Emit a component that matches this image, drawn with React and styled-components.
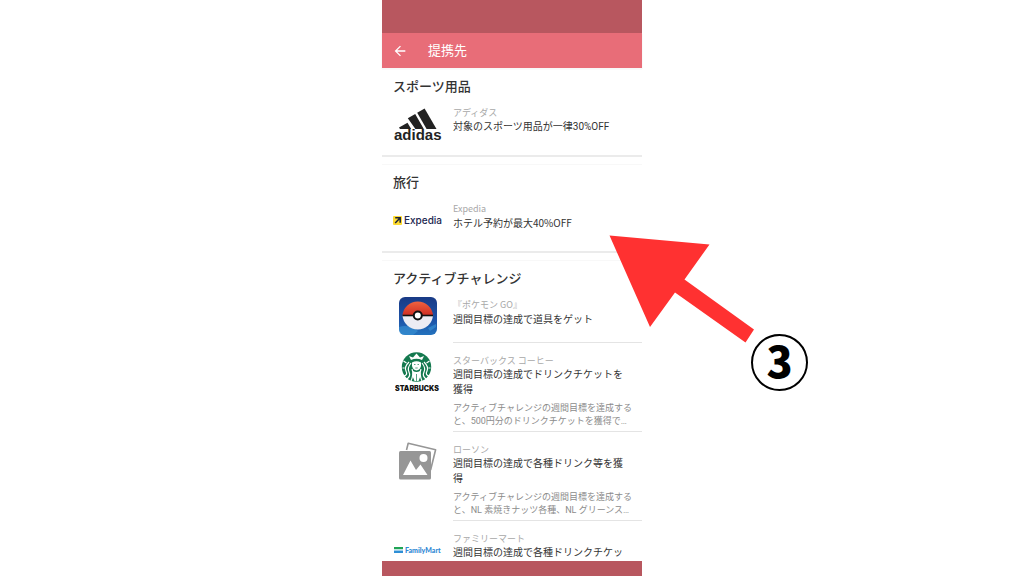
import React from 'react';
import styled, { createGlobalStyle } from 'styled-components';

const GlobalStyle = createGlobalStyle`
    * {
        box-sizing: border-box;
    }

    body {
        margin: 0;
        background-color: #fff;
        font-family: Roboto, 'Noto Sans CJK JP', sans-serif;
    }
`;

const Page = styled.div`
    position: relative;
    display: flex;
    justify-content: center;
    height: 100vh;
    overflow: hidden;
`;

const Phone = styled.div`
    display: flex;
    flex-direction: column;
    width: 100%;
    max-width: 260px;
    height: 100%;
    background-color: #fff;
`;

const SystemBar = styled.div`
    flex: none;
    height: ${({ $height }) => $height}px;
    background-color: #b8575f;
`;

const Header = styled.header`
    flex: none;
    display: flex;
    align-items: center;
    gap: 20px;
    height: 35px;
    padding: 0 10px;
    background-color: #e86d78;
    box-shadow: 0 1px 1px rgba(0, 0, 0, 0.12);
    color: #fff;
`;

const BackButton = styled.button`
    display: flex;
    padding: 0;
    border: none;
    background: none;
    color: inherit;
    cursor: pointer;
`;

const Title = styled.h1`
    margin: 0;
    font-size: 13px;
    font-weight: 400;
    line-height: 18px;
`;

const List = styled.main`
    flex: 1;
    min-height: 0;
    overflow: hidden;
`;

const Section = styled.section`
    margin-bottom: 7px;
    padding: 9px 0 4px;
    border-top: 1px solid #f8f8f8;
    border-bottom: 2px solid #ebebeb;
`;

const SectionTitle = styled.h2`
    margin: 0;
    padding-left: 11px;
    color: #333;
    font-size: 13px;
    font-weight: 500;
    line-height: 17px;
`;

const Items = styled.ul`
    margin: 0;
    padding: 0;
    list-style: none;
`;

const Item = styled.li`
    display: flex;
    min-height: 56px;
`;

const Logo = styled.div`
    flex: none;
    display: flex;
    align-items: center;
    justify-content: center;
    width: 71px;
    height: 40px;
    margin-top: 9px;
`;

const Body = styled.div`
    flex: 1;
    padding: 12px 0 3px;
    border-bottom: 1px solid ${({ $divider }) => ($divider ? '#e4e4e4' : 'transparent')};
    font-family: ${({ $cjkLatin }) => ($cjkLatin ? "'Noto Sans CJK JP', sans-serif" : 'inherit')};
`;

const Brand = styled.p`
    margin: 0;
    color: #a8a8a8;
    font-size: 9px;
    line-height: 12px;
`;

const Offer = styled.h3`
    margin: 0;
    padding-right: 14px;
    color: #333;
    font-size: 10px;
    font-weight: 400;
    line-height: 15px;
`;

const Detail = styled.p`
    margin: 5px 0 0;
    padding-right: 7px;
    color: #8c8c8c;
    font-size: 9px;
    line-height: 13px;
`;

const Pointer = styled.svg`
    position: absolute;
    top: 235px;
    left: calc(50% + 97px);
`;

const StepBadge = styled.div`
    position: absolute;
    top: 334px;
    left: calc(50% + 239px);
    display: flex;
    align-items: center;
    justify-content: center;
    width: 57px;
    height: 57px;
    padding-bottom: 6px;
    border: 2px solid #000;
    border-radius: 50%;
    color: #000;
    font-family: 'Noto Sans CJK JP', sans-serif;
    font-size: 43px;
    font-weight: 900;
    line-height: 47px;
`;

const AdidasLogo = () => (
    <svg width="50" height="36" viewBox="0 0 50 36" role="img" aria-label="adidas">
        <g fill="#222">
            <path d="M6 21.5 L14.5 16.7 L18.2 23 H7 Z" />
            <path d="M14.8 12.3 L22.2 8 L30.8 23 H22.4 L21 20.9 Z" />
            <path d="M24.2 6.7 L31.6 2.4 L43.5 23 H33.6 Z" />
        </g>
        <text x="1" y="34" fill="#222" fontFamily="'Liberation Sans', sans-serif" fontSize="15" fontWeight="700">adidas</text>
    </svg>
);

const ExpediaLogo = () => (
    <svg width="52" height="14" viewBox="0 0 52 14" role="img" aria-label="Expedia">
        <rect x="1" y="3" width="9" height="9" rx="1" fill="#fddb32" />
        <path d="M3.2 4.8 H8.2 V9.8 M8 5 L3.2 9.9" fill="none" stroke="#1e243a" strokeWidth="1.5" />
        <text x="12" y="11" fill="#20264f" fontFamily="Inter, sans-serif" fontSize="10" fontWeight="500">Expedia</text>
    </svg>
);

const PokemonLogo = () => (
    <svg width="38" height="38" viewBox="0 0 38 38" role="img" aria-label="Pokémon GO">
        <defs>
            <linearGradient id="sky" x1="0" y1="0" x2="0" y2="1">
                <stop offset="0" stopColor="#193a85" />
                <stop offset="0.6" stopColor="#1d53a8" />
                <stop offset="1" stopColor="#2372bd" />
            </linearGradient>
            <linearGradient id="ballTop" x1="0" y1="0" x2="0" y2="1">
                <stop offset="0" stopColor="#ee6340" />
                <stop offset="1" stopColor="#cf2c22" />
            </linearGradient>
        </defs>
        <rect width="38" height="38" rx="6" fill="url(#sky)" />
        <path d="M0 30 Q10 27 19 34 L14 38 H6 Q0 38 0 32 Z M29 31 L37 27 V30 L31 34 Z" fill="#3a94d6" opacity="0.6" />
        <path d="M3.5 18.5 A15.3 15.3 0 0 1 34 18.5 Z" fill="url(#ballTop)" />
        <path d="M3.5 18.5 A15.3 15.3 0 0 0 34 18.5 Z" fill="#ececf3" />
        <path d="M3.5 18.5 H34" stroke="#111" strokeWidth="1.6" />
        <circle cx="18.8" cy="18.5" r="4" fill="#fff" stroke="#111" strokeWidth="2" />
    </svg>
);

const StarbucksLogo = () => (
    <svg width="46" height="40" viewBox="0 0 46 40" role="img" aria-label="Starbucks">
        <circle cx="21.5" cy="15" r="14.7" fill="#14794f" />
        <g fill="none" stroke="#fff" strokeWidth="1.2">
            <path d="M16 11 Q12 16 14 20 T12 27" />
            <path d="M14 10 Q9 15 11 19 T9 24" />
            <path d="M27 11 Q31 16 29 20 T31 27" />
            <path d="M29 10 Q34 15 32 19 T34 24" />
            <path d="M17 17 Q19 22 16 29" />
            <path d="M26 17 Q24 22 27 29" />
            <path d="M8.5 9 L11.5 11 M34.5 9 L31.5 11 M7.5 16 H9.5 M35.5 16 H33.5" />
        </g>
        <path d="M17 10.5 Q21.5 8 26 10.5 V14 Q25 18 21.5 18.5 Q18 18 17 14 Z" fill="#fff" />
        <path d="M16 8 L14 4 L18 5.5 L21.5 1.5 L25 5.5 L29 4 L27 8 Q21.5 5.5 16 8 Z" fill="#fff" />
        <path d="M18 19 Q21.5 21 25 19 L25.5 24 L23.5 29 H19.5 L17.5 24 Z" fill="#fff" />
        <path d="M19 12.5 H20.5 M22.5 12.5 H24 M20.3 16 H22.7 M21.5 22 V29" stroke="#14794f" strokeWidth="0.7" />
        <text x="0" y="39" fill="#111" fontFamily="Inter, sans-serif" fontSize="7" fontWeight="900">STARBUCKS</text>
    </svg>
);

const PhotoPlaceholder = () => (
    <svg width="40" height="40" viewBox="0 0 40 40" role="img" aria-label="画像なし">
        <path d="M8.5 9 L10.2 2.2 L37.6 8.8 L32.6 29" fill="none" stroke="#969696" strokeWidth="1.6" strokeLinejoin="round" />
        <rect x="1" y="10" width="32" height="28.5" rx="1.5" fill="#969696" />
        <circle cx="25.5" cy="17" r="4" fill="#fff" />
        <path d="M5 34 L12.5 19.5 L18 29 L22.5 23.5 L29.5 34 Z" fill="#fff" />
    </svg>
);

const FamilyMartLogo = () => (
    <svg width="50" height="12" viewBox="0 0 50 12" role="img" aria-label="FamilyMart">
        <rect x="1" y="3" width="9" height="2.4" fill="#20a455" />
        <rect x="1" y="5.4" width="9" height="1.2" fill="#d9eef5" />
        <rect x="1" y="6.6" width="9" height="2.4" fill="#2e8fd6" />
        <text x="12" y="9" fill="#2f88d4" fontFamily="Lato, sans-serif" fontSize="7" fontWeight="900">FamilyMart</text>
    </svg>
);

const sections = [
    {
        title: 'スポーツ用品',
        items: [{ brand: 'アディダス', offer: '対象のスポーツ用品が一律30%OFF', logo: AdidasLogo }],
    },
    {
        title: '旅行',
        items: [{ brand: 'Expedia', offer: 'ホテル予約が最大40%OFF', logo: ExpediaLogo, cjkLatin: true }],
    },
    {
        title: 'アクティブチャレンジ',
        items: [
            { brand: '『ポケモン GO』', offer: '週間目標の達成で道具をゲット', logo: PokemonLogo, cjkLatin: true },
            {
                brand: 'スターバックス コーヒー',
                offer: '週間目標の達成でドリンクチケットを獲得',
                detail: 'アクティブチャレンジの週間目標を達成すると、500円分のドリンクチケットを獲得で…',
                logo: StarbucksLogo,
            },
            {
                brand: 'ローソン',
                offer: '週間目標の達成で各種ドリンク等を獲得',
                detail: 'アクティブチャレンジの週間目標を達成すると、NL 素焼きナッツ各種、NL グリーンス…',
                logo: PhotoPlaceholder,
            },
            { brand: 'ファミリーマート', offer: '週間目標の達成で各種ドリンクチケッ', logo: FamilyMartLogo },
        ],
    },
];

const PartnerItem = ({ item, divider }) => {
    const ItemLogo = item.logo;
    return (
        <Item>
            <Logo>
                <ItemLogo />
            </Logo>
            <Body $divider={divider} $cjkLatin={item.cjkLatin}>
                <Brand>{item.brand}</Brand>
                <Offer>{item.offer}</Offer>
                {item.detail && <Detail>{item.detail}</Detail>}
            </Body>
        </Item>
    );
};

const App = () => {
    return (
        <Page lang="ja">
            <GlobalStyle />
            <Phone>
                <SystemBar $height={33} />
                <Header>
                    <BackButton type="button" aria-label="戻る">
                        <svg width="16" height="16" viewBox="0 0 24 24" fill="currentColor">
                            <path d="M20 11H7.83l5.59-5.59L12 4l-8 8 8 8 1.41-1.41L7.83 13H20v-2z" />
                        </svg>
                    </BackButton>
                    <Title>提携先</Title>
                </Header>
                <List>
                    {sections.map((section) => (
                        <Section key={section.title}>
                            <SectionTitle>{section.title}</SectionTitle>
                            <Items>
                                {section.items.map((item, index) => (
                                    <PartnerItem
                                        key={item.brand}
                                        item={item}
                                        divider={index < section.items.length - 1}
                                    />
                                ))}
                            </Items>
                        </Section>
                    ))}
                </List>
                <SystemBar $height={15} />
            </Phone>
            <Pointer width="146" height="109" viewBox="0 0 146 109" aria-hidden="true">
                <path d="M.5 .5 L100.5 9.5 L75.5 44.5 L145 94.5 L136.5 107.5 L66 57.5 L41 92 Z" fill="#ff3131" />
            </Pointer>
            <StepBadge>3</StepBadge>
        </Page>
    );
};

export default App;
